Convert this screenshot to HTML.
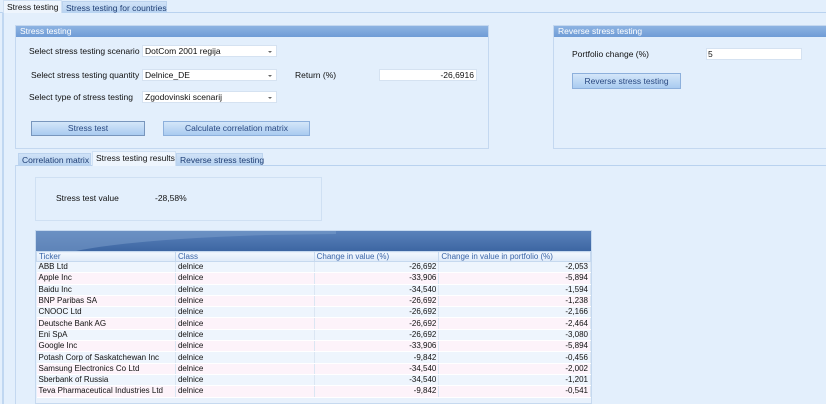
<!DOCTYPE html><html><head><style>
*{margin:0;padding:0;box-sizing:border-box}
body{width:826px;height:404px;overflow:hidden;background:#e3effc;font-family:"Liberation Sans",sans-serif;font-size:8.5px;color:#111;position:relative}
.a{position:absolute}
.tab{position:absolute;border:1px solid #bcd3ee;border-bottom:none;padding:1px 3px 0;font-size:8.5px;white-space:nowrap}
.grp{position:absolute;border:1px solid #c4d8f0;background:#e3effc}
.gh{height:11px;background:linear-gradient(#8db3e2,#6f9cd6);color:#fff;padding-left:4px;font-size:8.5px;line-height:11px}
.cb{position:absolute;background:#fff;border:1px solid #d5e2f1;height:12px;padding-left:2px;line-height:11px}
.cb:after{content:"";position:absolute;right:4px;top:5px;border:2px solid transparent;border-top:2px solid #666}
.btn{position:absolute;background:linear-gradient(#d4e6f9,#a9cbf0);border:1px solid #8db0dc;color:#2b4a82;text-align:center;font-size:8.5px}
table{border-collapse:collapse;font-size:8px}
td{height:11.3px;padding:0 2px;border-right:1px solid #dbe6f3;border-bottom:1px solid #fff;line-height:10px;white-space:nowrap}
tr:nth-child(odd) td{background:#fdf3fa}
tr:nth-child(even) td{background:#eef5fd}
td.r{text-align:right}
th{font-weight:normal;color:#3a65a8;text-align:left;padding:0 2px;height:10px;line-height:9px;border:1px solid #c6d9ef;background:linear-gradient(#f3f8fe,#dfeaf8)}
</style></head><body>
<div class="a" style="left:0;top:12px;width:826px;height:1px;background:#b9d2ef"></div>
<div class="a" style="left:2px;top:12px;width:2px;height:392px;background:#c0d7f1"></div>
<div class="tab" style="left:3px;top:0;height:13px;width:59px;background:#eef5fd;border-color:#d0e1f4">Stress testing</div>
<div class="tab" style="left:62px;top:1px;height:12px;width:105px;background:linear-gradient(#cfe2f7,#b8d3f1);color:#1e3d73">Stress testing for countries</div>

<div class="grp" style="left:15px;top:25px;width:474px;height:124px"><div class="gh">Stress testing</div></div>
<div class="a" style="left:29px;top:46px">Select stress testing scenario</div>
<div class="cb" style="left:142px;top:45px;width:135px">DotCom 2001 regija</div>
<div class="a" style="left:31px;top:70px">Select stress testing quantity</div>
<div class="cb" style="left:142px;top:69px;width:135px">Delnice_DE</div>
<div class="a" style="left:295px;top:70px">Return (%)</div>
<div class="a" style="left:379px;top:69px;width:98px;height:12px;background:#fff;border:1px solid #d5e2f1;text-align:right;padding-right:2px;line-height:11px">-26,6916</div>
<div class="a" style="left:29px;top:92px">Select type of stress testing</div>
<div class="cb" style="left:142px;top:91px;width:135px">Zgodovinski scenarij</div>
<div class="btn" style="left:31px;top:121px;width:114px;height:15px;line-height:13px;border-color:#7896bd">Stress test</div>
<div class="btn" style="left:163px;top:121px;width:147px;height:15px;line-height:13px">Calculate correlation matrix</div>

<div class="grp" style="left:553px;top:25px;width:280px;height:124px"><div class="gh">Reverse stress testing</div></div>
<div class="a" style="left:572px;top:49px">Portfolio change (%)</div>
<div class="a" style="left:706px;top:48px;width:96px;height:12px;background:#fff;border:1px solid #d5e2f1;padding-left:1px;line-height:11px">5</div>
<div class="btn" style="left:572px;top:73px;width:109px;height:16px;line-height:14px">Reverse stress testing</div>

<div class="a" style="left:15px;top:165px;width:811px;height:1px;background:#b9d2ef"></div>
<div class="a" style="left:15px;top:165px;width:1px;height:239px;background:#c4d8f0"></div>
<div class="tab" style="left:18px;top:153px;height:12px;width:73px;background:linear-gradient(#cfe2f7,#b8d3f1);color:#1e3d73">Correlation matrix</div>
<div class="tab" style="left:92px;top:151px;height:15px;width:84px;background:#eef5fd;border-color:#d0e1f4">Stress testing results</div>
<div class="tab" style="left:176px;top:153px;height:12px;width:87px;background:linear-gradient(#cfe2f7,#b8d3f1);color:#1e3d73">Reverse stress testing</div>

<div class="a" style="left:35px;top:177px;width:287px;height:44px;border:1px solid #cfe0f3"></div>
<div class="a" style="left:56px;top:193px">Stress test value</div>
<div class="a" style="left:155px;top:193px">-28,58%</div>

<div class="a" style="left:35px;top:230px;width:557px;height:174px;border:1px solid #c6d9ef;background:#e8f1fc">
<svg width="555" height="20" style="display:block"><defs><linearGradient id="g" x1="0" y1="0" x2="0" y2="1"><stop offset="0" stop-color="#5a82bb"/><stop offset="1" stop-color="#3d66a2"/></linearGradient></defs><rect width="555" height="20" fill="url(#g)"/><path d="M0 4 L0 20 L60 20 Q120 8 260 6 L555 5 L555 0 Z" fill="none"/><path d="M0 0 L0 20 L40 20 Q100 8 230 4 L300 3 L300 0 Z" fill="#7a9dcb" opacity="0.55"/></svg>
<table style="width:555px">
<colgroup><col style="width:139px"><col style="width:139px"><col style="width:125px"><col style="width:152px"></colgroup>
<tr><th>Ticker</th><th>Class</th><th>Change in value (%)</th><th>Change in value in portfolio (%)</th></tr>
<tr><td>ABB Ltd</td><td>delnice</td><td class="r">-26,692</td><td class="r">-2,053</td></tr>
<tr><td>Apple Inc</td><td>delnice</td><td class="r">-33,906</td><td class="r">-5,894</td></tr>
<tr><td>Baidu Inc</td><td>delnice</td><td class="r">-34,540</td><td class="r">-1,594</td></tr>
<tr><td>BNP Paribas SA</td><td>delnice</td><td class="r">-26,692</td><td class="r">-1,238</td></tr>
<tr><td>CNOOC Ltd</td><td>delnice</td><td class="r">-26,692</td><td class="r">-2,166</td></tr>
<tr><td>Deutsche Bank AG</td><td>delnice</td><td class="r">-26,692</td><td class="r">-2,464</td></tr>
<tr><td>Eni SpA</td><td>delnice</td><td class="r">-26,692</td><td class="r">-3,080</td></tr>
<tr><td>Google Inc</td><td>delnice</td><td class="r">-33,906</td><td class="r">-5,894</td></tr>
<tr><td>Potash Corp of Saskatchewan Inc</td><td>delnice</td><td class="r">-9,842</td><td class="r">-0,456</td></tr>
<tr><td>Samsung Electronics Co Ltd</td><td>delnice</td><td class="r">-34,540</td><td class="r">-2,002</td></tr>
<tr><td>Sberbank of Russia</td><td>delnice</td><td class="r">-34,540</td><td class="r">-1,201</td></tr>
<tr><td>Teva Pharmaceutical Industries Ltd</td><td>delnice</td><td class="r">-9,842</td><td class="r">-0,541</td></tr>
</table></div>
</body></html>
